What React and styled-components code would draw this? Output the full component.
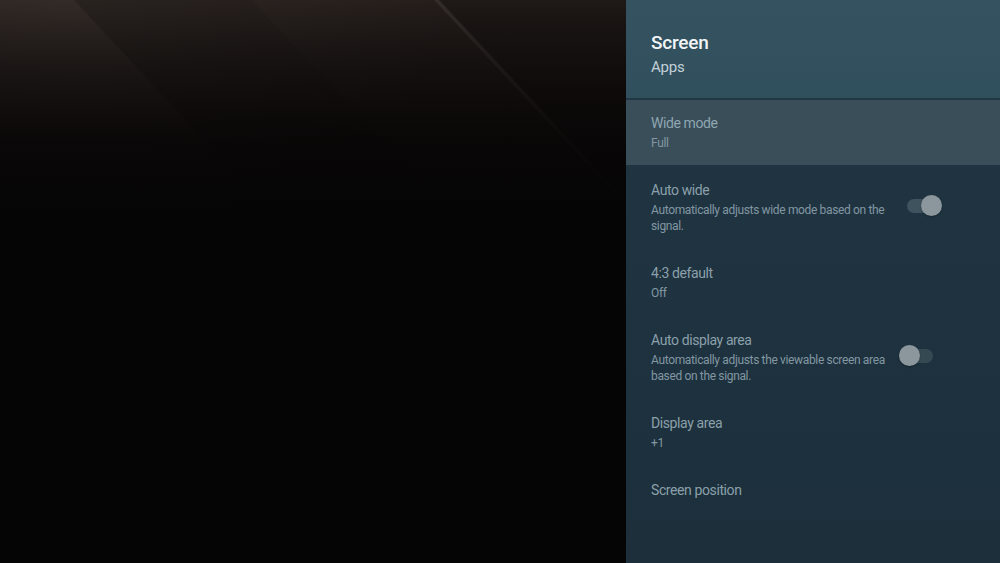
import React from "react";
import styled, { createGlobalStyle } from "styled-components";

const GlobalStyle = createGlobalStyle`
  html, body {
    margin: 0;
    padding: 0;
    background: #050505;
  }
  * {
    box-sizing: border-box;
  }
`;

const SETTINGS = [
  { title: "Wide mode", value: "Full", selected: true },
  {
    title: "Auto wide",
    desc: "Automatically adjusts wide mode based on the signal.",
    toggle: true,
    on: true,
  },
  { title: "4:3 default", value: "Off" },
  {
    title: "Auto display area",
    desc: "Automatically adjusts the viewable screen area based on the signal.",
    toggle: true,
    on: false,
  },
  { title: "Display area", value: "+1" },
  { title: "Screen position" },
];

const Screen = styled.div`
  display: flex;
  width: 1000px;
  height: 563px;
  overflow: hidden;
  font-family: Roboto, "Noto Sans", sans-serif;
`;

// dark wallpaper with faint diagonal light streaks at the top
const Backdrop = styled.div`
  flex: 1;
  background:
    linear-gradient(180deg, rgba(6, 5, 5, 0) 0px, rgba(6, 5, 5, 0.45) 70px, rgba(6, 5, 5, 0.85) 140px, #060505 210px),
    linear-gradient(47deg,
      transparent 0 437px,
      rgba(0, 0, 0, 0.2) 439px 567px,
      rgba(0, 0, 0, 0.12) 569px 701px,
      rgba(255, 255, 255, 0.05) 702px 704px,
      rgba(0, 0, 0, 0.28) 706px),
    radial-gradient(ellipse 60% 40% at 12% 0%, rgba(60, 52, 48, 0.5) 0%, transparent 100%),
    linear-gradient(180deg, #2a221f 0%, #1b1412 25%, #0d0a09 45%, #060505 60%);
`;

const Panel = styled.div`
  width: 374px;
  display: flex;
  flex-direction: column;
  background: linear-gradient(180deg, #213643 0%, #1e3240 55%, #1c2f3b 100%);
`;

const Header = styled.div`
  height: 100px;
  padding: 32px 25px 0;
  background: linear-gradient(180deg, #34525f 0%, #31505e 100%);
  border-bottom: 2px solid #223743;
`;

const PanelTitle = styled.div`
  font-size: 19px;
  font-weight: 500;
  line-height: 22px;
  letter-spacing: -0.2px;
  color: #f1f5f7;
`;

const PanelSubtitle = styled.div`
  margin-top: 4px;
  font-size: 15px;
  line-height: 18px;
  letter-spacing: -0.2px;
  color: #c2d0d7;
`;

const List = styled.div`
  display: flex;
  flex-direction: column;
`;

const Row = styled.div`
  display: flex;
  align-items: flex-start;
  gap: 8px;
  padding: 13px 25px ${({ $selected }) => ($selected ? "14px" : "16px")};
  margin-bottom: ${({ $selected }) => ($selected ? "2px" : "0")};
  background: ${({ $selected }) => ($selected ? "#3a4e5a" : "transparent")};
`;

const RowText = styled.div`
  flex: 1;
  min-width: 0;
`;

const RowTitle = styled.div`
  font-size: 14px;
  line-height: 20px;
  letter-spacing: -0.4px;
  color: ${({ $selected }) => ($selected ? "#8ea6b1" : "#8ba0aa")};
`;

const RowDesc = styled.div`
  margin-top: 2px;
  font-size: 12px;
  line-height: 16px;
  letter-spacing: -0.35px;
  color: #8297a1;
`;

const Switch = styled.div`
  position: relative;
  flex: none;
  width: 44px;
  height: 22px;
  margin-top: 15px;
  margin-right: 32px;
`;

const Track = styled.div`
  position: absolute;
  top: 4px;
  left: ${({ $on }) => ($on ? "8px" : "0")};
  width: 34px;
  height: 14px;
  border-radius: 7px;
  background: ${({ $on }) => ($on ? "#3f535e" : "#354953")};
`;

const Thumb = styled.div`
  position: absolute;
  top: 0;
  left: ${({ $on }) => ($on ? "22px" : "0")};
  width: 21px;
  height: 21px;
  border-radius: 50%;
  background: #8c979d;
  box-shadow: 0 1px 2px rgba(0, 0, 0, 0.25);
`;

function Toggle({ on }) {
  return (
    <Switch>
      <Track $on={on} />
      <Thumb $on={on} />
    </Switch>
  );
}

function SettingRow({ item }) {
  return (
    <Row $selected={item.selected}>
      <RowText>
        <RowTitle $selected={item.selected}>{item.title}</RowTitle>
        {(item.value || item.desc) && <RowDesc>{item.value || item.desc}</RowDesc>}
      </RowText>
      {item.toggle && <Toggle on={item.on} />}
    </Row>
  );
}

export default function App() {
  return (
    <Screen>
      <GlobalStyle />
      <Backdrop />
      <Panel>
        <Header>
          <PanelTitle>Screen</PanelTitle>
          <PanelSubtitle>Apps</PanelSubtitle>
        </Header>
        <List>
          {SETTINGS.map((item, index) => (
            <SettingRow key={`setting_${item.title}_${index}`} item={item} />
          ))}
        </List>
      </Panel>
    </Screen>
  );
}
